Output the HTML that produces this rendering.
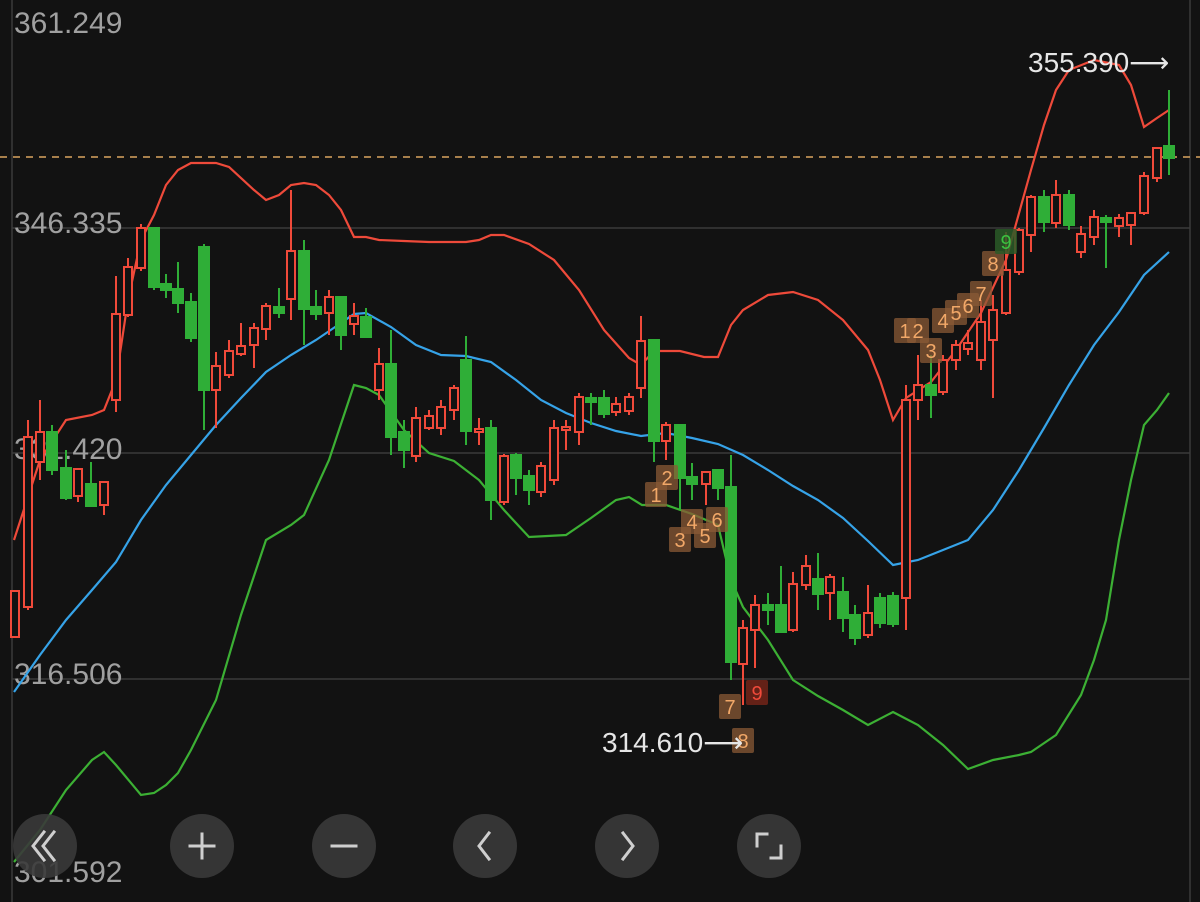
<!DOCTYPE html>
<html><head><meta charset="utf-8"><style>
html,body{margin:0;padding:0;background:#121212;}
svg{display:block}
text{font-family:"Liberation Sans","DejaVu Sans",sans-serif;}
</style></head><body>
<svg width="1200" height="902" viewBox="0 0 1200 902" xmlns="http://www.w3.org/2000/svg">
<rect width="1200" height="902" fill="#121212"/>
<g stroke="#3a3a3a" stroke-width="1.5">
<line x1="12" y1="0" x2="12" y2="902"/>
<line x1="1190" y1="0" x2="1190" y2="902"/>
<line x1="12" y1="228" x2="1190" y2="228"/>
<line x1="12" y1="453" x2="1190" y2="453"/>
<line x1="12" y1="679" x2="1190" y2="679"/>
</g>
<line x1="0" y1="157" x2="1200" y2="157" stroke="#d9a560" stroke-width="1.5" stroke-dasharray="7,6"/>
<g font-size="30" fill="#a0a0a0">
<text x="14" y="33">361.249</text>
<text x="14" y="233">346.335</text>
<text x="14" y="459">331.420</text>
<text x="14" y="684">316.506</text>
<text x="14" y="882">301.592</text>
</g>
<polyline fill="none" stroke="#ee4a3a" stroke-width="2.2" points="14,540 40,460 66,420 92,415 104,410 116,380 128,300 141,240 154,215 166,185 178,170 191,163 216,163 229,167 254,190 266,200 279,195 291,185 304,183 316,185 329,195 341,210 354,237 366,237 379,240 404,241 429,242 466,242 479,240 491,235 504,235 529,244 554,260 579,290 604,330 629,358 641,365 654,351 680,351 704,357 718,357 731,325 743,310 768,295 793,292 818,300 843,320 868,350 880,380 893,420 906,398 931,382 956,350 981,313 1006,260 1031,170 1044,125 1056,90 1069,70 1094,60 1119,65 1131,85 1144,127 1157,118 1169,110"/>
<polyline fill="none" stroke="#36a3e8" stroke-width="2.2" points="14,692 40,655 66,620 92,590 116,562 141,520 166,485 191,455 216,425 241,398 266,372 291,355 316,340 341,323 354,314 366,313 391,327 416,345 441,355 466,356 491,362 516,380 541,400 566,413 591,423 616,431 641,436 666,433 692,438 718,444 743,455 768,470 793,486 818,500 843,518 868,541 893,565 918,560 943,550 968,540 993,510 1019,470 1044,428 1069,385 1094,345 1119,312 1144,275 1169,252"/>
<polyline fill="none" stroke="#3cb034" stroke-width="2.2" points="14,862 40,830 66,790 92,760 104,752 116,765 141,795 154,793 166,785 178,773 191,750 216,700 241,615 266,540 291,525 304,515 329,460 354,385 366,388 379,395 404,430 429,453 454,461 479,480 504,510 529,537 566,535 591,518 616,500 629,497 642,505 666,505 692,514 718,525 731,580 743,607 768,640 793,680 818,696 843,710 868,725 893,712 918,725 943,745 968,769 993,760 1019,755 1031,752 1056,735 1081,695 1094,660 1106,620 1119,540 1131,480 1144,425 1157,410 1169,393"/>
<g stroke="#f04a3a" stroke-width="2" fill="#121212">
<line x1="15" y1="591" x2="15" y2="637"/><rect x="11" y="591" width="8" height="46"/>
<line x1="28" y1="420" x2="28" y2="610"/><rect x="24" y="437" width="8" height="170"/>
<line x1="40" y1="400" x2="40" y2="480"/><rect x="36" y="432" width="8" height="30"/>
<line x1="78" y1="469" x2="78" y2="502"/><rect x="74" y="469" width="8" height="27"/>
<line x1="104" y1="482" x2="104" y2="515"/><rect x="100" y="482" width="8" height="23"/>
<line x1="116" y1="276" x2="116" y2="412"/><rect x="112" y="314" width="8" height="86"/>
<line x1="128" y1="258" x2="128" y2="317"/><rect x="124" y="267" width="8" height="48"/>
<line x1="141" y1="224" x2="141" y2="271"/><rect x="137" y="228" width="8" height="40"/>
<line x1="216" y1="352" x2="216" y2="428"/><rect x="212" y="366" width="8" height="24"/>
<line x1="229" y1="340" x2="229" y2="378"/><rect x="225" y="351" width="8" height="24"/>
<line x1="241" y1="323" x2="241" y2="356"/><rect x="237" y="346" width="8" height="8"/>
<line x1="254" y1="323" x2="254" y2="368"/><rect x="250" y="328" width="8" height="17"/>
<line x1="266" y1="303" x2="266" y2="340"/><rect x="262" y="306" width="8" height="23"/>
<line x1="291" y1="190" x2="291" y2="320"/><rect x="287" y="251" width="8" height="48"/>
<line x1="329" y1="290" x2="329" y2="335"/><rect x="325" y="297" width="8" height="16"/>
<line x1="354" y1="303" x2="354" y2="335"/><rect x="350" y="316" width="8" height="8"/>
<line x1="379" y1="348" x2="379" y2="400"/><rect x="375" y="364" width="8" height="26"/>
<line x1="416" y1="407" x2="416" y2="462"/><rect x="412" y="418" width="8" height="38"/>
<line x1="429" y1="410" x2="429" y2="430"/><rect x="425" y="416" width="8" height="12"/>
<line x1="441" y1="400" x2="441" y2="435"/><rect x="437" y="407" width="8" height="21"/>
<line x1="454" y1="385" x2="454" y2="420"/><rect x="450" y="388" width="8" height="22"/>
<line x1="479" y1="418" x2="479" y2="445"/><rect x="475" y="429" width="8" height="3"/>
<line x1="504" y1="454" x2="504" y2="505"/><rect x="500" y="456" width="8" height="46"/>
<line x1="541" y1="462" x2="541" y2="497"/><rect x="537" y="466" width="8" height="26"/>
<line x1="554" y1="420" x2="554" y2="485"/><rect x="550" y="428" width="8" height="52"/>
<line x1="566" y1="420" x2="566" y2="450"/><rect x="562" y="427" width="8" height="3"/>
<line x1="579" y1="393" x2="579" y2="445"/><rect x="575" y="397" width="8" height="35"/>
<line x1="616" y1="397" x2="616" y2="416"/><rect x="612" y="404" width="8" height="8"/>
<line x1="629" y1="393" x2="629" y2="415"/><rect x="625" y="397" width="8" height="14"/>
<line x1="641" y1="316" x2="641" y2="398"/><rect x="637" y="341" width="8" height="47"/>
<line x1="666" y1="422" x2="666" y2="460"/><rect x="662" y="425" width="8" height="16"/>
<line x1="706" y1="471" x2="706" y2="505"/><rect x="702" y="472" width="8" height="12"/>
<line x1="743" y1="620" x2="743" y2="705"/><rect x="739" y="628" width="8" height="36"/>
<line x1="755" y1="595" x2="755" y2="668"/><rect x="751" y="605" width="8" height="25"/>
<line x1="793" y1="572" x2="793" y2="632"/><rect x="789" y="584" width="8" height="46"/>
<line x1="806" y1="555" x2="806" y2="590"/><rect x="802" y="566" width="8" height="19"/>
<line x1="830" y1="574" x2="830" y2="620"/><rect x="826" y="577" width="8" height="16"/>
<line x1="868" y1="585" x2="868" y2="638"/><rect x="864" y="613" width="8" height="22"/>
<line x1="906" y1="385" x2="906" y2="630"/><rect x="902" y="400" width="8" height="198"/>
<line x1="918" y1="355" x2="918" y2="420"/><rect x="914" y="385" width="8" height="15"/>
<line x1="943" y1="355" x2="943" y2="395"/><rect x="939" y="360" width="8" height="32"/>
<line x1="956" y1="340" x2="956" y2="370"/><rect x="952" y="345" width="8" height="15"/>
<line x1="968" y1="330" x2="968" y2="355"/><rect x="964" y="343" width="8" height="6"/>
<line x1="981" y1="300" x2="981" y2="370"/><rect x="977" y="322" width="8" height="38"/>
<line x1="993" y1="295" x2="993" y2="398"/><rect x="989" y="310" width="8" height="30"/>
<line x1="1006" y1="232" x2="1006" y2="315"/><rect x="1002" y="270" width="8" height="43"/>
<line x1="1019" y1="228" x2="1019" y2="275"/><rect x="1015" y="230" width="8" height="42"/>
<line x1="1031" y1="195" x2="1031" y2="252"/><rect x="1027" y="197" width="8" height="38"/>
<line x1="1056" y1="180" x2="1056" y2="228"/><rect x="1052" y="195" width="8" height="28"/>
<line x1="1081" y1="226" x2="1081" y2="258"/><rect x="1077" y="234" width="8" height="18"/>
<line x1="1094" y1="210" x2="1094" y2="245"/><rect x="1090" y="217" width="8" height="20"/>
<line x1="1119" y1="214" x2="1119" y2="237"/><rect x="1115" y="218" width="8" height="8"/>
<line x1="1131" y1="212" x2="1131" y2="245"/><rect x="1127" y="213" width="8" height="12"/>
<line x1="1144" y1="172" x2="1144" y2="215"/><rect x="1140" y="176" width="8" height="37"/>
<line x1="1157" y1="148" x2="1157" y2="182"/><rect x="1153" y="148" width="8" height="30"/>
</g>
<g stroke="#2fae37" stroke-width="2" fill="#2fae37">
<line x1="52" y1="425" x2="52" y2="475"/><rect x="47" y="432" width="10" height="38"/>
<line x1="66" y1="450" x2="66" y2="500"/><rect x="61" y="468" width="10" height="30"/>
<line x1="91" y1="462" x2="91" y2="507"/><rect x="86" y="484" width="10" height="22"/>
<line x1="154" y1="228" x2="154" y2="290"/><rect x="149" y="228" width="10" height="59"/>
<line x1="166" y1="274" x2="166" y2="298"/><rect x="161" y="284" width="10" height="6"/>
<line x1="178" y1="262" x2="178" y2="313"/><rect x="173" y="289" width="10" height="14"/>
<line x1="191" y1="293" x2="191" y2="342"/><rect x="186" y="302" width="10" height="36"/>
<line x1="204" y1="244" x2="204" y2="430"/><rect x="199" y="247" width="10" height="143"/>
<line x1="279" y1="288" x2="279" y2="318"/><rect x="274" y="307" width="10" height="6"/>
<line x1="304" y1="240" x2="304" y2="345"/><rect x="299" y="251" width="10" height="58"/>
<line x1="316" y1="290" x2="316" y2="320"/><rect x="311" y="307" width="10" height="7"/>
<line x1="341" y1="297" x2="341" y2="350"/><rect x="336" y="297" width="10" height="38"/>
<line x1="366" y1="308" x2="366" y2="337"/><rect x="361" y="317" width="10" height="20"/>
<line x1="391" y1="330" x2="391" y2="455"/><rect x="386" y="364" width="10" height="73"/>
<line x1="404" y1="420" x2="404" y2="468"/><rect x="399" y="432" width="10" height="18"/>
<line x1="466" y1="336" x2="466" y2="445"/><rect x="461" y="360" width="10" height="71"/>
<line x1="491" y1="420" x2="491" y2="520"/><rect x="486" y="428" width="10" height="72"/>
<line x1="516" y1="453" x2="516" y2="495"/><rect x="511" y="455" width="10" height="23"/>
<line x1="529" y1="470" x2="529" y2="505"/><rect x="524" y="476" width="10" height="14"/>
<line x1="591" y1="393" x2="591" y2="425"/><rect x="586" y="398" width="10" height="4"/>
<line x1="604" y1="390" x2="604" y2="418"/><rect x="599" y="398" width="10" height="16"/>
<line x1="654" y1="340" x2="654" y2="462"/><rect x="649" y="340" width="10" height="101"/>
<line x1="680" y1="425" x2="680" y2="510"/><rect x="675" y="425" width="10" height="53"/>
<line x1="692" y1="463" x2="692" y2="500"/><rect x="687" y="477" width="10" height="7"/>
<line x1="718" y1="470" x2="718" y2="500"/><rect x="713" y="470" width="10" height="18"/>
<line x1="731" y1="455" x2="731" y2="680"/><rect x="726" y="487" width="10" height="175"/>
<line x1="768" y1="593" x2="768" y2="625"/><rect x="763" y="605" width="10" height="5"/>
<line x1="781" y1="566" x2="781" y2="633"/><rect x="776" y="605" width="10" height="27"/>
<line x1="818" y1="553" x2="818" y2="610"/><rect x="813" y="579" width="10" height="15"/>
<line x1="843" y1="577" x2="843" y2="632"/><rect x="838" y="592" width="10" height="26"/>
<line x1="855" y1="605" x2="855" y2="645"/><rect x="850" y="615" width="10" height="23"/>
<line x1="880" y1="593" x2="880" y2="628"/><rect x="875" y="598" width="10" height="25"/>
<line x1="893" y1="592" x2="893" y2="627"/><rect x="888" y="596" width="10" height="28"/>
<line x1="931" y1="355" x2="931" y2="418"/><rect x="926" y="385" width="10" height="10"/>
<line x1="1044" y1="190" x2="1044" y2="232"/><rect x="1039" y="197" width="10" height="25"/>
<line x1="1069" y1="190" x2="1069" y2="230"/><rect x="1064" y="195" width="10" height="30"/>
<line x1="1106" y1="215" x2="1106" y2="268"/><rect x="1101" y="218" width="10" height="4"/>
<line x1="1169" y1="90" x2="1169" y2="175"/><rect x="1164" y="146" width="10" height="12"/>
</g>
<g font-size="20" text-anchor="middle">
<g fill="#8a5a36" fill-opacity="0.75">
<rect x="645" y="482" width="22" height="25" rx="2"/>
<rect x="656" y="465" width="22" height="25" rx="2"/>
<rect x="669" y="527" width="22" height="25" rx="2"/>
<rect x="681" y="509" width="22" height="25" rx="2"/>
<rect x="694" y="523" width="22" height="25" rx="2"/>
<rect x="706" y="507" width="22" height="25" rx="2"/>
<rect x="719" y="694" width="22" height="25" rx="2"/>
<rect x="732" y="728" width="22" height="25" rx="2"/>
<rect x="894" y="318" width="22" height="25" rx="2"/>
<rect x="907" y="318" width="22" height="25" rx="2"/>
<rect x="920" y="338" width="22" height="25" rx="2"/>
<rect x="932" y="308" width="22" height="25" rx="2"/>
<rect x="945" y="300" width="22" height="25" rx="2"/>
<rect x="957" y="293" width="22" height="25" rx="2"/>
<rect x="970" y="281" width="22" height="25" rx="2"/>
<rect x="982" y="251" width="22" height="25" rx="2"/>
</g>
<rect x="746" y="680" width="22" height="25" rx="2" fill="#6e2418" fill-opacity="0.9"/>
<rect x="995" y="229" width="22" height="25" rx="2" fill="#2a5a28" fill-opacity="0.85"/>
<g fill="#f2a868">
<text x="656" y="502">1</text><text x="667" y="485">2</text><text x="680" y="547">3</text>
<text x="692" y="529">4</text><text x="705" y="543">5</text><text x="717" y="527">6</text>
<text x="730" y="714">7</text><text x="743" y="748">8</text>
<text x="905" y="338">1</text><text x="918" y="338">2</text><text x="931" y="358">3</text>
<text x="943" y="328">4</text><text x="956" y="320">5</text><text x="968" y="313">6</text>
<text x="981" y="301">7</text><text x="993" y="271">8</text>
</g>
<text x="757" y="700" fill="#f04a3a">9</text>
<text x="1006" y="249" fill="#3cc040">9</text>
</g>
<g font-size="28" fill="#e6e6e6">
<text x="1028" y="72">355.390⟶</text>
<text x="602" y="752">314.610⟶</text>
</g>
<g fill="#3a3a3a" fill-opacity="0.9">
<circle cx="45" cy="846" r="32"/><circle cx="202" cy="846" r="32"/><circle cx="344" cy="846" r="32"/>
<circle cx="485" cy="846" r="32"/><circle cx="627" cy="846" r="32"/><circle cx="769" cy="846" r="32"/>
</g>
<g stroke="#cfcfcf" stroke-width="3" fill="none" stroke-linecap="square">
<path d="M44,832 L33,846 L44,860 M54,832 L43,846 L54,860"/>
<path d="M202,834 V858 M190,846 H214"/>
<path d="M332,846 H356"/>
<path d="M489,833 L479,846 L489,859"/>
<path d="M623,833 L633,846 L623,859"/>
<path d="M757,846 V834 H767 M781,846 V858 H771"/>
</g>
</svg>
</body></html>
